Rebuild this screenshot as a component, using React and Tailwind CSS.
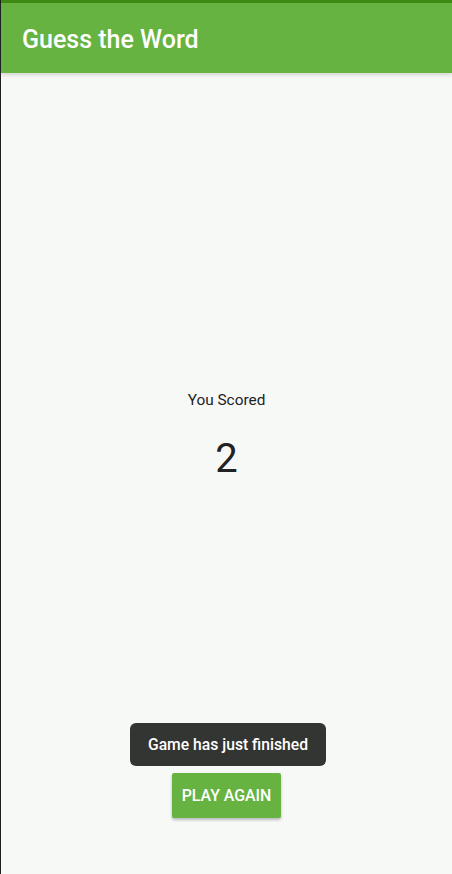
export default function App() {
  return (
    <div className="relative w-[452px] h-[874px] flex flex-col bg-[#f7f9f7] border-l border-[#1e1e1e] overflow-hidden" style={{ fontFamily: "Roboto, 'Noto Sans', sans-serif" }}>
      <div className="h-[3px] bg-[#3d8b12]" />
      <div className="h-[70px] bg-[#66b342] flex items-center pl-[21px] pt-[3px] shadow-[0_2px_4px_rgba(0,0,0,0.15)] z-10">
        <span className="text-white text-[25px] font-medium leading-none">Guess the Word</span>
      </div>
      <div className="flex-1 flex flex-col items-center">
        <div className="mt-[318px] text-[15.4px] leading-[19px] text-[#222]">You Scored</div>
        <div className="mt-[25px] text-[40px] leading-[47px] text-[#222]">2</div>
        <div className="flex-1" />
        <button className="mb-[56px] h-[45px] px-[10px] bg-[#66b342] text-white text-[15.9px] font-medium rounded-[2px] shadow-[0_2px_3px_rgba(0,0,0,0.25)]">PLAY AGAIN</button>
      </div>
      <div className="absolute left-[129px] top-[723px] w-[196px] h-[43px] rounded-[6px] bg-[#333533] flex items-center justify-center text-white text-[15.7px] font-medium">
        Game has just finished
      </div>
    </div>
  );
}
